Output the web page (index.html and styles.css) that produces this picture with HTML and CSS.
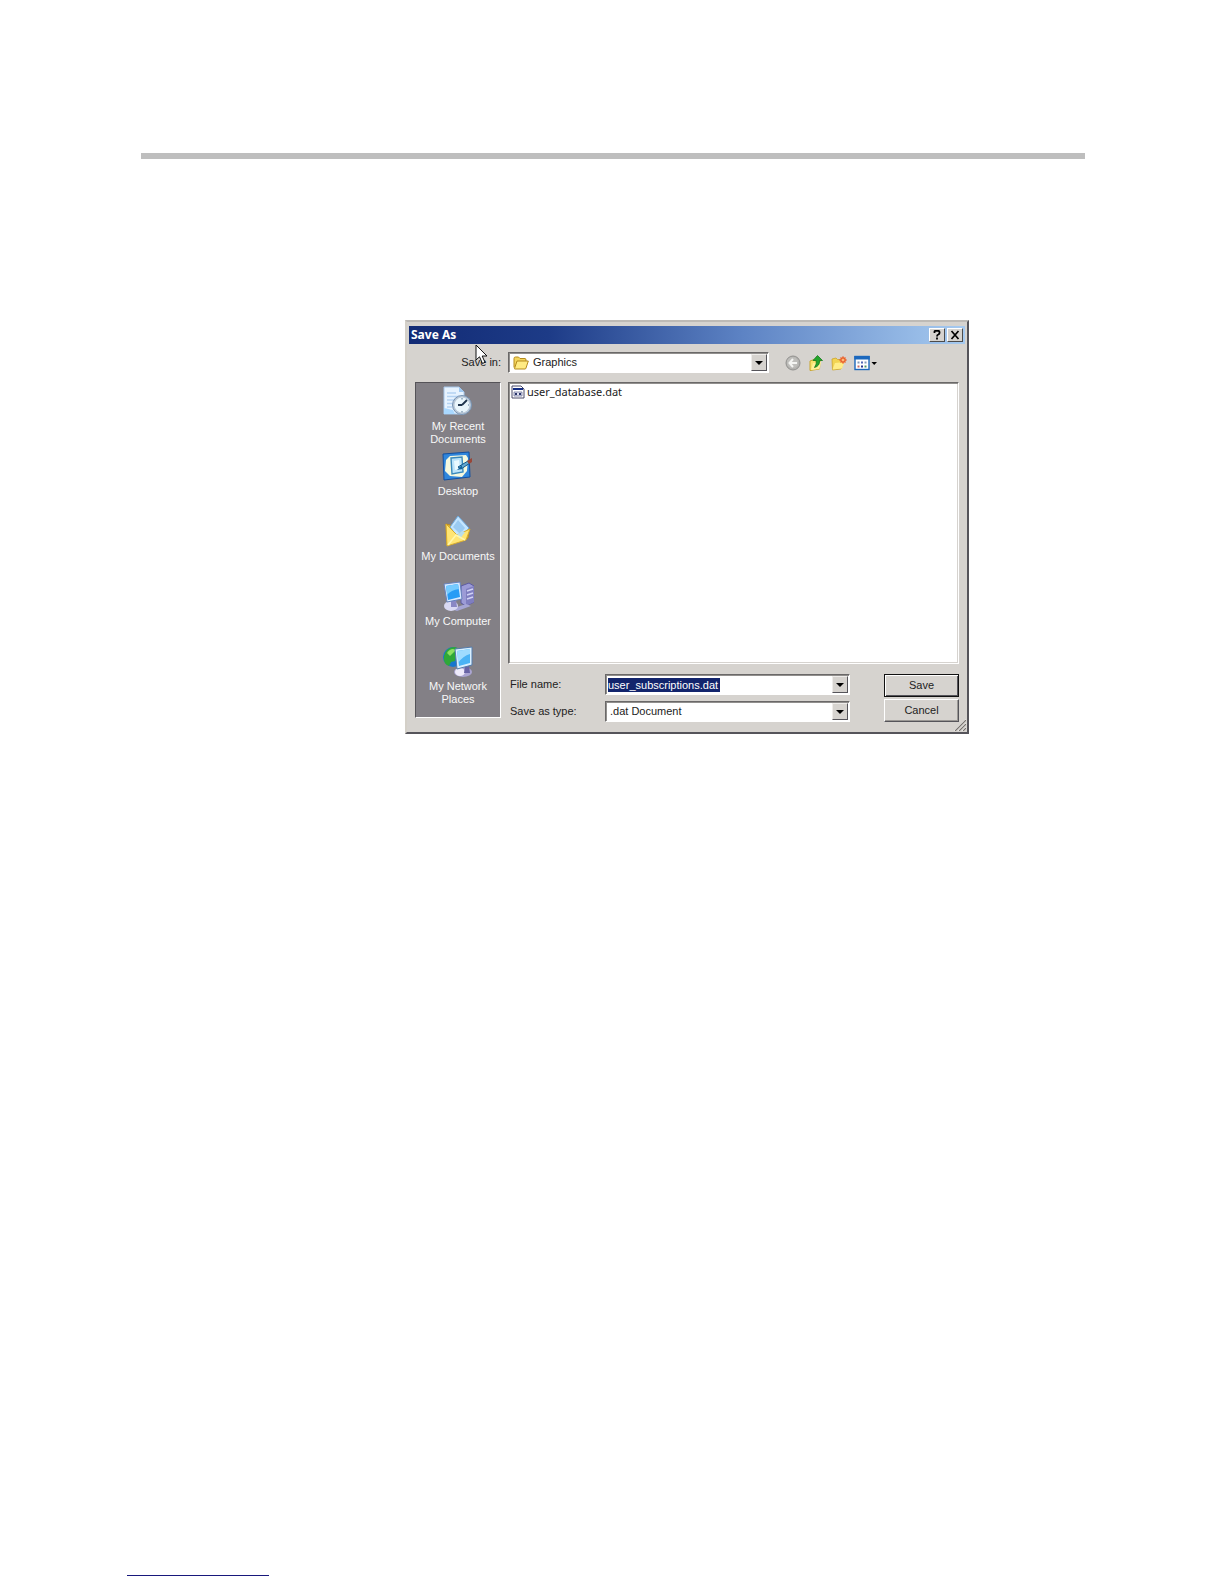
FILE: index.html
```html
<!DOCTYPE html>
<html lang="en">
<head>
<meta charset="utf-8">
<title>Save As</title>
<link rel="stylesheet" href="styles.css">
</head>
<body>
<div class="page">
  <header class="page-rule"></header>
  <main class="content">
    <section class="dialog" aria-labelledby="dialog-title">
      <div class="titlebar">
        <h1 class="title" id="dialog-title">Save As</h1>
        <button class="caption-button" type="button" aria-label="Help">
          <svg width="12" height="10" viewBox="0 0 12 10"><path d="M3.5 3V1.6Q3.500.8 4.8.8H7Q8.500.8 8.5 2V3Q8.500 4 7.300 4.500Q6 5 6 6.400M6 7.600V9.400" fill="none" stroke="#000" stroke-width="1.800"/></svg>
        </button>
        <button class="caption-button" type="button" aria-label="Close">
          <svg width="12" height="10" viewBox="0 0 12 10"><path d="M2.500 1L9.500 9M9.500 1L2.500 9" stroke="#000" stroke-width="1.700"/></svg>
        </button>
      </div>

      <div class="toolbar">
        <label class="toolbar-label" for="folder">Save in:</label>
        <div class="combo folder-combo">
          <svg class="folder-icon" width="16" height="14" viewBox="0 0 16 14"><path d="M1 11.500V2.500Q1 1 2.500 1H5.500L7 2.500H12Q13 2.500 13 4V5" fill="#f3d55c" stroke="#b58a1c"/><path d="M1.500 12.500L4 5H15.300L13 12Q12.800 13 12 13H2Q1.300 13 1.500 12.500Z" fill="#ffeb83" stroke="#b58a1c"/></svg>
          <select class="combo-value" id="folder"><option>Graphics</option></select>
          <span class="combo-arrow"></span>
        </div>
        <div class="tools">
          <button class="tool" type="button" aria-label="Back">
            <svg width="16" height="16" viewBox="0 0 16 16"><circle cx="8" cy="8" r="7" fill="#b3b2af" stroke="#92918f"/><circle cx="7.500" cy="7.500" r="5.500" fill="#bfbebb"/><path d="M8 4L4.500 8L8 12M5 8H12" fill="none" stroke="#f4f4f2" stroke-width="2"/></svg>
          </button>
          <button class="tool" type="button" aria-label="Up one level">
            <svg width="16" height="16" viewBox="0 0 16 16"><path d="M2 6L6 4.500L7 6L12 5L11.500 14L2 15.500Z" fill="#f7e36c" stroke="#c9a52e"/><path d="M3 15L5 8L13 7L11.500 14Z" fill="#fff09a"/><path d="M9.500.5L14.500 5.500H11.500Q12 11 6.500 12.500Q9 9 8.300 5.500H5Z" fill="#24a52c" stroke="#167a1c" stroke-width=".8"/></svg>
          </button>
          <button class="tool" type="button" aria-label="Create new folder">
            <svg width="16" height="16" viewBox="0 0 16 16"><path d="M1 4L5 3L6.500 4.500H11.500V10L10 14L1.500 15Z" fill="#f2d453" stroke="#cba52d" stroke-width=".8"/><path d="M1.500 14.500L4 8L13.500 7L11 13.500Z" fill="#ffed88"/><circle cx="12" cy="5" r="3" fill="#f1793b"/><path d="M12 1V9M8 5H16M9.500 2.500L14.500 7.500M14.500 2.500L9.500 7.500" stroke="#e2572e" stroke-width=".8"/><circle cx="12" cy="5" r="1.300" fill="#ffb976"/></svg>
          </button>
          <button class="tool tool-menu" type="button" aria-label="Views">
            <svg width="24" height="16" viewBox="0 0 24 16"><rect x="1" y="1.500" width="14" height="13" fill="#fff" stroke="#1c68bd" stroke-width="1.400"/><path d="M.3 1H15.700V4.500H.3Z" fill="#1c68bd"/><path d="M3.500 6.500h2v2h-2zM10.500 6.500h2v2h-2z" fill="#8499b8"/><path d="M7 6.500h2v2h-2z" fill="#5369b8"/><path d="M3.500 10.500h2v2h-2z" fill="#c86a62"/><path d="M7 10.500h2v2h-2z" fill="#27358c"/><path d="M10.500 10.500h2v2h-2z" fill="#4f9562"/><path d="M17.500 7H23L20.200 10Z" fill="#000"/></svg>
          </button>
        </div>
      </div>

      <div class="body">
        <nav class="places">
          <button class="place" type="button">
            <svg width="32" height="32" viewBox="0 0 32 32"><path d="M2 2H17L22 7V29H2Z" fill="#e7f3ff" stroke="#a6c6e9"/><path d="M17 2V7H22Z" fill="#9fc9f2"/><path d="M5 8H14M5 11.500H18M5 15H13M5 18.500H11M5 22H10" stroke="#b4d2f2" stroke-width="1.500"/><path d="M2 23L11 25L13 29H2Z" fill="#a9d8ff"/><circle cx="20" cy="20" r="9.500" fill="#b9c7d7" stroke="#7794b4"/><circle cx="20" cy="20" r="7.500" fill="#e9f5fb"/><path d="M20 20L25 15M20 20H16" stroke="#20354d" stroke-width="1.800"/><path d="M20 13V14.500M20 26V27.500M26 20H27" stroke="#567695"/></svg>
            My Recent Documents
          </button>
          <button class="place" type="button">
            <svg width="32" height="32" viewBox="0 0 32 32"><path d="M1 4L27 2L28 27L2 30Z" fill="#2f86dc" stroke="#124f9f"/><path d="M8 6L24 5L26 8L25 21L20 27L8 26L3 21L4 10Z" fill="#f5f9df"/><path d="M9 8L20 7L21 22L10 24Z" fill="#bce4fa" stroke="#3989bc" stroke-width="1.400"/><path d="M12 11L17 10L18 19L13 20Z" fill="#e9faff"/><path d="M16 17L26 11L28 13L19 19Z" fill="#63a9d2" stroke="#145687"/><path d="M25 11L30 8L30 12L27 14Z" fill="#994638"/><path d="M15 20L20 15V19Z" fill="#12659c"/></svg>
            Desktop
          </button>
          <button class="place" type="button">
            <svg width="32" height="32" viewBox="0 0 32 32"><path d="M4 9L8 10L27 15L26 23L5 30Z" fill="#e8b931" stroke="#b98d20"/><path d="M8 12L16 1L27 13L18 25Z" fill="#c3e5ff" stroke="#6ca7db"/><path d="M11 12L16 5L23 13L18 19Z" fill="#9acbf2"/><path d="M4 9L15 20L28 14L24 25L5 31Z" fill="#ffe573" stroke="#d9ad2c"/><path d="M15 20L20 16L23 17L18 24Z" fill="#b9ddea"/><path d="M6 30L14 20L23 25" fill="none" stroke="#fff6ac" stroke-width="1.500"/></svg>
            My Documents
          </button>
          <button class="place" type="button">
            <svg width="32" height="32" viewBox="0 0 32 32"><path d="M19 6L27 3L32 6V22L24 26L19 23Z" fill="#9c9bd6" stroke="#5d5ca2"/><path d="M24 9L32 6V22L24 26Z" fill="#7f7ec0"/><path d="M25 11L31 9M25 15L31 13M25 19L31 17" stroke="#d1d2f4" stroke-width="1.400"/><path d="M9 29L24 24L29 26L15 31Z" fill="#a5a5d4"/><ellipse cx="9" cy="26" rx="7" ry="5" fill="#d9d9f3"/><path d="M9 20H14L15 27H9Z" fill="#8a88c4"/><path d="M2 4L18 2L20 19L5 22Z" fill="#d8eaff" stroke="#6782bc"/><path d="M4 6L16 4L18 17L6 20Z" fill="#279cf5"/><path d="M4 6L16 4L17 9Q9 10 5 15Z" fill="#75cbff"/></svg>
            My Computer
          </button>
          <button class="place" type="button">
            <svg width="32" height="32" viewBox="0 0 32 32"><circle cx="11" cy="12" r="10" fill="#1676ce"/><path d="M2 11Q4 2 13 2Q20 4 19 9L14 11L13 16L9 17L7 21Q1 19 2 11Z" fill="#2fa838"/><path d="M5 8Q9 2 14 5L8 11Z" fill="#8de061"/><ellipse cx="21" cy="27" rx="9" ry="5" fill="#aaa4d2"/><ellipse cx="18" cy="27" rx="5" ry="4" fill="#eeeafa"/><path d="M23 21H27L28 28H22Z" fill="#6863a5"/><path d="M13 4L30 2V20L15 24Z" fill="#d9efff" stroke="#547cac"/><path d="M15 6L28 4V18L17 21Z" fill="#4ab3f5"/><path d="M15 6L28 4V9Q21 11 16 18Z" fill="#9fdcff"/></svg>
            My Network Places
          </button>
        </nav>

        <div class="main-column">
          <ul class="file-list">
            <li class="file">
              <svg width="14" height="14" viewBox="0 0 14 14"><path d="M1 1H10L13 4V13H1Z" fill="#fff" stroke="#4a4a68"/><path d="M2 3H12V5H2Z" fill="#142d83"/><path d="M3 7H11V11H3Z" fill="#dddff0" stroke="#5b628c" stroke-width=".7"/><path d="M4 8h2v2h-2zM8 8h2v2h-2z" fill="#283468"/></svg>
              user_database.dat
            </li>
          </ul>
          <form class="save-form">
            <div class="fields">
              <label for="filename">File name:</label>
              <div class="combo">
                <input class="filename" id="filename" type="text" value="user_subscriptions.dat">
                <span class="combo-arrow"></span>
              </div>
              <label for="filetype">Save as type:</label>
              <div class="combo">
                <select class="combo-value" id="filetype"><option>.dat Document</option></select>
                <span class="combo-arrow"></span>
              </div>
            </div>
            <div class="actions">
              <button class="action action-default" type="button">Save</button>
              <button class="action" type="button">Cancel</button>
            </div>
          </form>
        </div>
      </div>
      <svg class="grip" width="12" height="12" viewBox="0 0 12 12"><path d="M0 12L12 0M4 12L12 4M8 12L12 8" stroke="#fff"/><path d="M1 12L12 1M5 12L12 5M9 12L12 9" stroke="#77736f" stroke-width="1.200"/></svg>
      <svg class="pointer" width="13" height="21" viewBox="0 0 13 21"><path d="M1 1V16L4.500 12.800L7.500 19.500L10 18.300L7.200 12H12Z" fill="#fff" stroke="#111"/></svg>
    </section>
  </main>
  <footer class="page-footer"><div class="footer-line"></div></footer>
</div>
</body>
</html>
```
FILE: styles.css
```css
* {
  box-sizing: border-box;
}

body {
  margin: 0;
  background: #fff;
  color: #222;
  font: 11px/13px "Liberation Sans", Arial, sans-serif;
}

button,
input,
select {
  margin: 0;
  padding: 0;
  border: 0;
  border-radius: 0;
  color: inherit;
  font: inherit;
}

svg {
  display: block;
  flex: none;
}

.page {
  display: flex;
  flex-direction: column;
  min-height: 100vh;
  padding: 153px 139px 8px 127px;
}

.page-rule {
  height: 6px;
  margin-left: 14px;
  background: #bebebe;
}

.content {
  padding: 161px 0 40px 278px;
}

.dialog {
  position: relative;
  max-width: 564px;
  padding: 4px 2px 10px;
  border: 2px solid;
  border-color: #bdbab6 #55545a #55545a #d4d0c8;
  background: #d6d3cf;
}

.titlebar {
  display: flex;
  align-items: center;
  gap: 2px;
  height: 18px;
  padding: 0 2px;
  background: linear-gradient(90deg, #122b75, #1d3b87 25%, #5d83c4 60%, #a6caf0);
}

.title {
  flex: 1;
  margin: 0;
  color: #fff;
  font: bold 12px/14px "Noto Sans", Tahoma, sans-serif;
}

.caption-button {
  display: grid;
  place-items: center;
  width: 16px;
  height: 14px;
  border: 1px solid;
  border-color: #fff #4c4b4b #4c4b4b #fff;
  background: #d6d3cf;
}

.toolbar {
  display: flex;
  align-items: center;
  padding: 8px 6px 9px;
}

.toolbar-label {
  width: 93px;
  padding-right: 7px;
  text-align: right;
}

.combo {
  display: flex;
  align-items: center;
  height: 21px;
  padding: 1px 1px 1px 2px;
  border: 1px solid;
  border-color: #6a6868 #fff #fff #6a6868;
  background: #fff;
  box-shadow: inset 1px 1px #918f8d;
}

.folder-combo {
  width: 261px;
}

.folder-icon {
  margin: 0 4px 0 2px;
}

.combo-value {
  flex: 1;
  min-width: 0;
  appearance: none;
  background: none;
}

.combo-arrow {
  display: grid;
  place-items: center;
  width: 16px;
  height: 17px;
  margin-left: auto;
  border: 1px solid;
  border-color: #eeecea #55545a #55545a #eeecea;
  background: #d6d3cf;
}

.combo-arrow::before {
  content: "";
  border: 4px solid transparent;
  border-top-color: #000;
  border-bottom: 0;
}

.tools {
  display: flex;
  gap: 7px;
  padding-left: 16px;
}

.tool {
  width: 16px;
  height: 16px;
  background: none;
}

.tool-menu {
  width: 24px;
}

.body {
  display: flex;
  gap: 7px;
  padding: 0 6px;
}

.places {
  flex: none;
  width: 86px;
  margin-bottom: 4px;
  padding-top: 2px;
  border: 1px solid;
  border-color: #555358 #fff #fff #555358;
  background: #838086;
}

.place {
  display: flex;
  flex-direction: column;
  align-items: center;
  gap: 3px;
  width: 100%;
  height: 65px;
  padding: 0 5px;
  background: none;
  color: #f8f8f8;
}

.main-column {
  flex: 1;
  min-width: 0;
}

.file-list {
  height: 282px;
  margin: 0 0 10px;
  padding: 2px;
  border: 1px solid;
  border-color: #6a6868 #fff #fff #6a6868;
  background: #fff;
  box-shadow: inset 1px 1px #918f8d, inset -1px -1px #d6d3cf;
  list-style: none;
}

.file {
  display: flex;
  align-items: center;
  gap: 2px;
  font: 11px/14px "Noto Sans", Tahoma, sans-serif;
}

.save-form {
  display: flex;
  justify-content: space-between;
}

.fields {
  display: grid;
  grid-template-columns: 95px 245px;
  row-gap: 6px;
  align-content: start;
  align-items: center;
  padding-left: 2px;
}

.filename {
  width: 112px;
  height: 14px;
  background: #12246c;
  color: #fff;
}

.fields .combo-value {
  padding-left: 2px;
}

.actions {
  display: flex;
  flex-direction: column;
  gap: 2px;
  width: 75px;
}

.action {
  height: 23px;
  border: 1px solid;
  border-color: #fff #55545a #55545a #fff;
  background: #d6d3cf;
  box-shadow: inset -1px -1px #9a9794;
}

.action-default {
  border: 1px solid #111;
  box-shadow: inset 1px 1px #fff, inset -1px -1px #55545a;
}

.grip {
  position: absolute;
  right: 1px;
  bottom: 1px;
}

.pointer {
  position: absolute;
  left: 68px;
  top: 22px;
}

.page-footer {
  margin-top: auto;
}

.footer-line {
  width: 142px;
  height: 1px;
  background: #18187c;
}
```
